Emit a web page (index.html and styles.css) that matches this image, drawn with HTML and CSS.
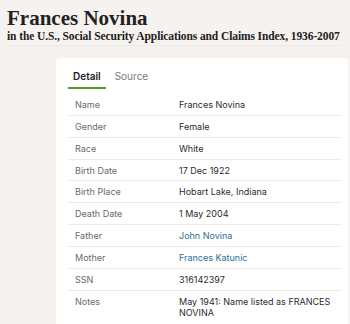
FILE: index.html
```html
<!DOCTYPE html>
<html lang="en">
<head>
  <meta charset="UTF-8">
  <title>Frances Novina</title>
  <link rel="stylesheet" href="styles.css">
</head>
<body>
  <div class="header">
    <h1>Frances Novina</h1>
    <h2>in the U.S., Social Security Applications and Claims Index, 1936-2007</h2>
  </div>

  <div class="card">
    <div class="tabs">
      <span class="tab active">Detail</span>
      <span class="tab">Source</span>
    </div>
    <table class="facts">
      <tr><th>Name</th><td>Frances Novina</td></tr>
      <tr><th>Gender</th><td>Female</td></tr>
      <tr><th>Race</th><td>White</td></tr>
      <tr><th>Birth Date</th><td>17 Dec 1922</td></tr>
      <tr><th>Birth Place</th><td>Hobart Lake, Indiana</td></tr>
      <tr><th>Death Date</th><td>1 May 2004</td></tr>
      <tr><th>Father</th><td><a href="#">John Novina</a></td></tr>
      <tr><th>Mother</th><td><a href="#">Frances Katunic</a></td></tr>
      <tr><th>SSN</th><td>316142397</td></tr>
      <tr><th>Notes</th><td>May 1941: Name listed as FRANCES NOVINA</td></tr>
    </table>
  </div>
</body>
</html>
```

FILE: styles.css
```css
:root {
  --bg: #f5f2ef;
  --card: #ffffff;
  --line: #eeebe8;
  --label: #6a6a6a;
  --text: #2b2b2b;
  --link: #2a6f96;
  --accent: #5b9a2c;
}

* {
  box-sizing: border-box;
}

body {
  margin: 0;
  background-color: var(--bg);
  font-family: Inter, "Noto Sans", sans-serif;
  color: var(--text);
  overflow: hidden;
  height: 324px;
}

.header {
  padding: 6px 0 0 7px;
}

h1 {
  margin: 0;
  font-family: "Liberation Serif", serif;
  font-size: 21px;
  line-height: 24px;
  color: #222;
}

h2 {
  margin: 0;
  font-family: "Liberation Serif", serif;
  font-size: 11.5px;
  line-height: 13px;
  color: #222;
  letter-spacing: -0.1px;
  white-space: nowrap;
  width: fit-content;
  padding-bottom: 2px;
  border-bottom: 1px solid #ece8e4;
}

.card {
  background-color: var(--card);
  margin: 12px 2px 0 56px;
  padding: 8px 6px 10px 12px;
  border-radius: 4px 4px 0 0;
}

.tabs {
  display: flex;
  gap: 4px;
  margin-bottom: 5px;
}

.tab {
  font-size: 10px;
  line-height: 21px;
  padding: 0 5px;
  color: #7a7a7a;
  border-bottom: 2px solid transparent;
}

.tab.active {
  color: #222;
  font-weight: 600;
  border-bottom-color: var(--accent);
}

.facts {
  width: 100%;
  border-collapse: collapse;
  font-size: 9px;
}

.facts th,
.facts td {
  text-align: left;
  vertical-align: top;
  padding: 5px 7px 4px;
  line-height: 11.85px;
  border-bottom: 1px solid var(--line);
}

.facts tr:last-child th,
.facts tr:last-child td {
  border-bottom: none;
}

.facts th {
  font-weight: normal;
  color: var(--label);
  width: 111px;
}

.facts td {
  padding-left: 0;
  padding-right: 4px;
}

.facts a {
  color: var(--link);
  text-decoration: none;
}
```
